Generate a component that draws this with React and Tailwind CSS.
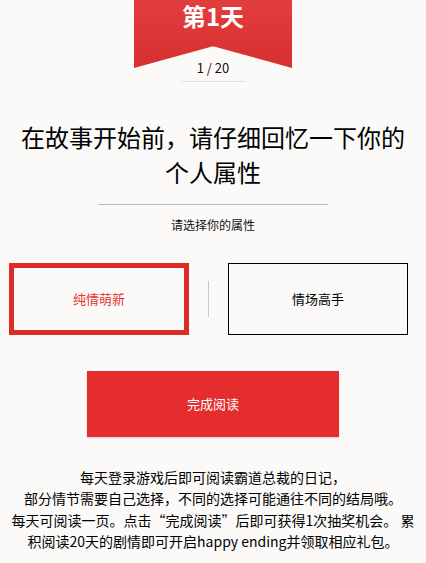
import React, { useState } from 'react';

const options = ['纯情萌新', '情场高手'];

const App = () => {
  const [selected, setSelected] = useState(0);

  return (
    <div
      className="w-[426px] h-[563px] overflow-hidden bg-[#fbfaf8] text-[#111] flex flex-col items-center"
      style={{ fontFamily: '"Noto Sans CJK SC", "Noto Sans", sans-serif' }}
    >
      {/* ribbon */}
      <div className="w-[158px] h-[68px] shrink-0 bg-gradient-to-b from-[#e23d3f] to-[#d72f30] [clip-path:polygon(0_0,100%_0,100%_100%,50%_68%,0_100%)] flex justify-center pt-[3px]">
        <span className="text-white font-bold text-[24px] leading-[26px]">第1天</span>
      </div>
      <div className="-mt-[8px] text-[13px] leading-[16px]">1 / 20</div>
      <div className="mt-[5px] w-[65px] h-px bg-[#e2e2e2]"></div>

      <h1 className="mt-[37px] text-[24px] leading-[35px] font-normal text-center text-black">
        在故事开始前，请仔细回忆一下你的
        <br />
        个人属性
      </h1>

      <div className="mt-[15px] w-[230px] h-px bg-[#bdbdbd]"></div>
      <p className="mt-[12px] text-[12px] leading-[16px]">请选择你的属性</p>

      <div className="mt-[30px] w-full px-[9px] flex items-center justify-between">
        <button
          onClick={() => setSelected(0)}
          className={`w-[180px] h-[72px] flex items-center justify-center text-[13px] ${
            selected === 0 ? 'border-[5px] border-[#dd2c27] text-[#e8332f]' : 'border border-black text-black'
          }`}
        >
          {options[0]}
        </button>
        <div className="w-px h-[36px] bg-[#c8c8c8]"></div>
        <button
          onClick={() => setSelected(1)}
          className={`mr-[9px] w-[180px] h-[72px] flex items-center justify-center text-[13px] ${
            selected === 1 ? 'border-[5px] border-[#dd2c27] text-[#e8332f]' : 'border border-black text-black'
          }`}
        >
          {options[1]}
        </button>
      </div>

      <button className="mt-[36px] w-[252px] h-[66px] bg-[#e52d30] text-white text-[13px] shadow-[0_1px_2px_rgba(0,0,0,0.15)]">
        完成阅读
      </button>

      <p className="mt-[30px] text-[14px] leading-[21.3px] text-center text-black">
        每天登录游戏后即可阅读霸道总裁的日记，
        <br />
        部分情节需要自己选择，不同的选择可能通往不同的结局哦。
        <br />
        每天可阅读一页。点击“完成阅读”后即可获得1次抽奖机会。 累
        <br />
        积阅读20天的剧情即可开启happy ending并领取相应礼包。
      </p>
    </div>
  );
};

export default App;
